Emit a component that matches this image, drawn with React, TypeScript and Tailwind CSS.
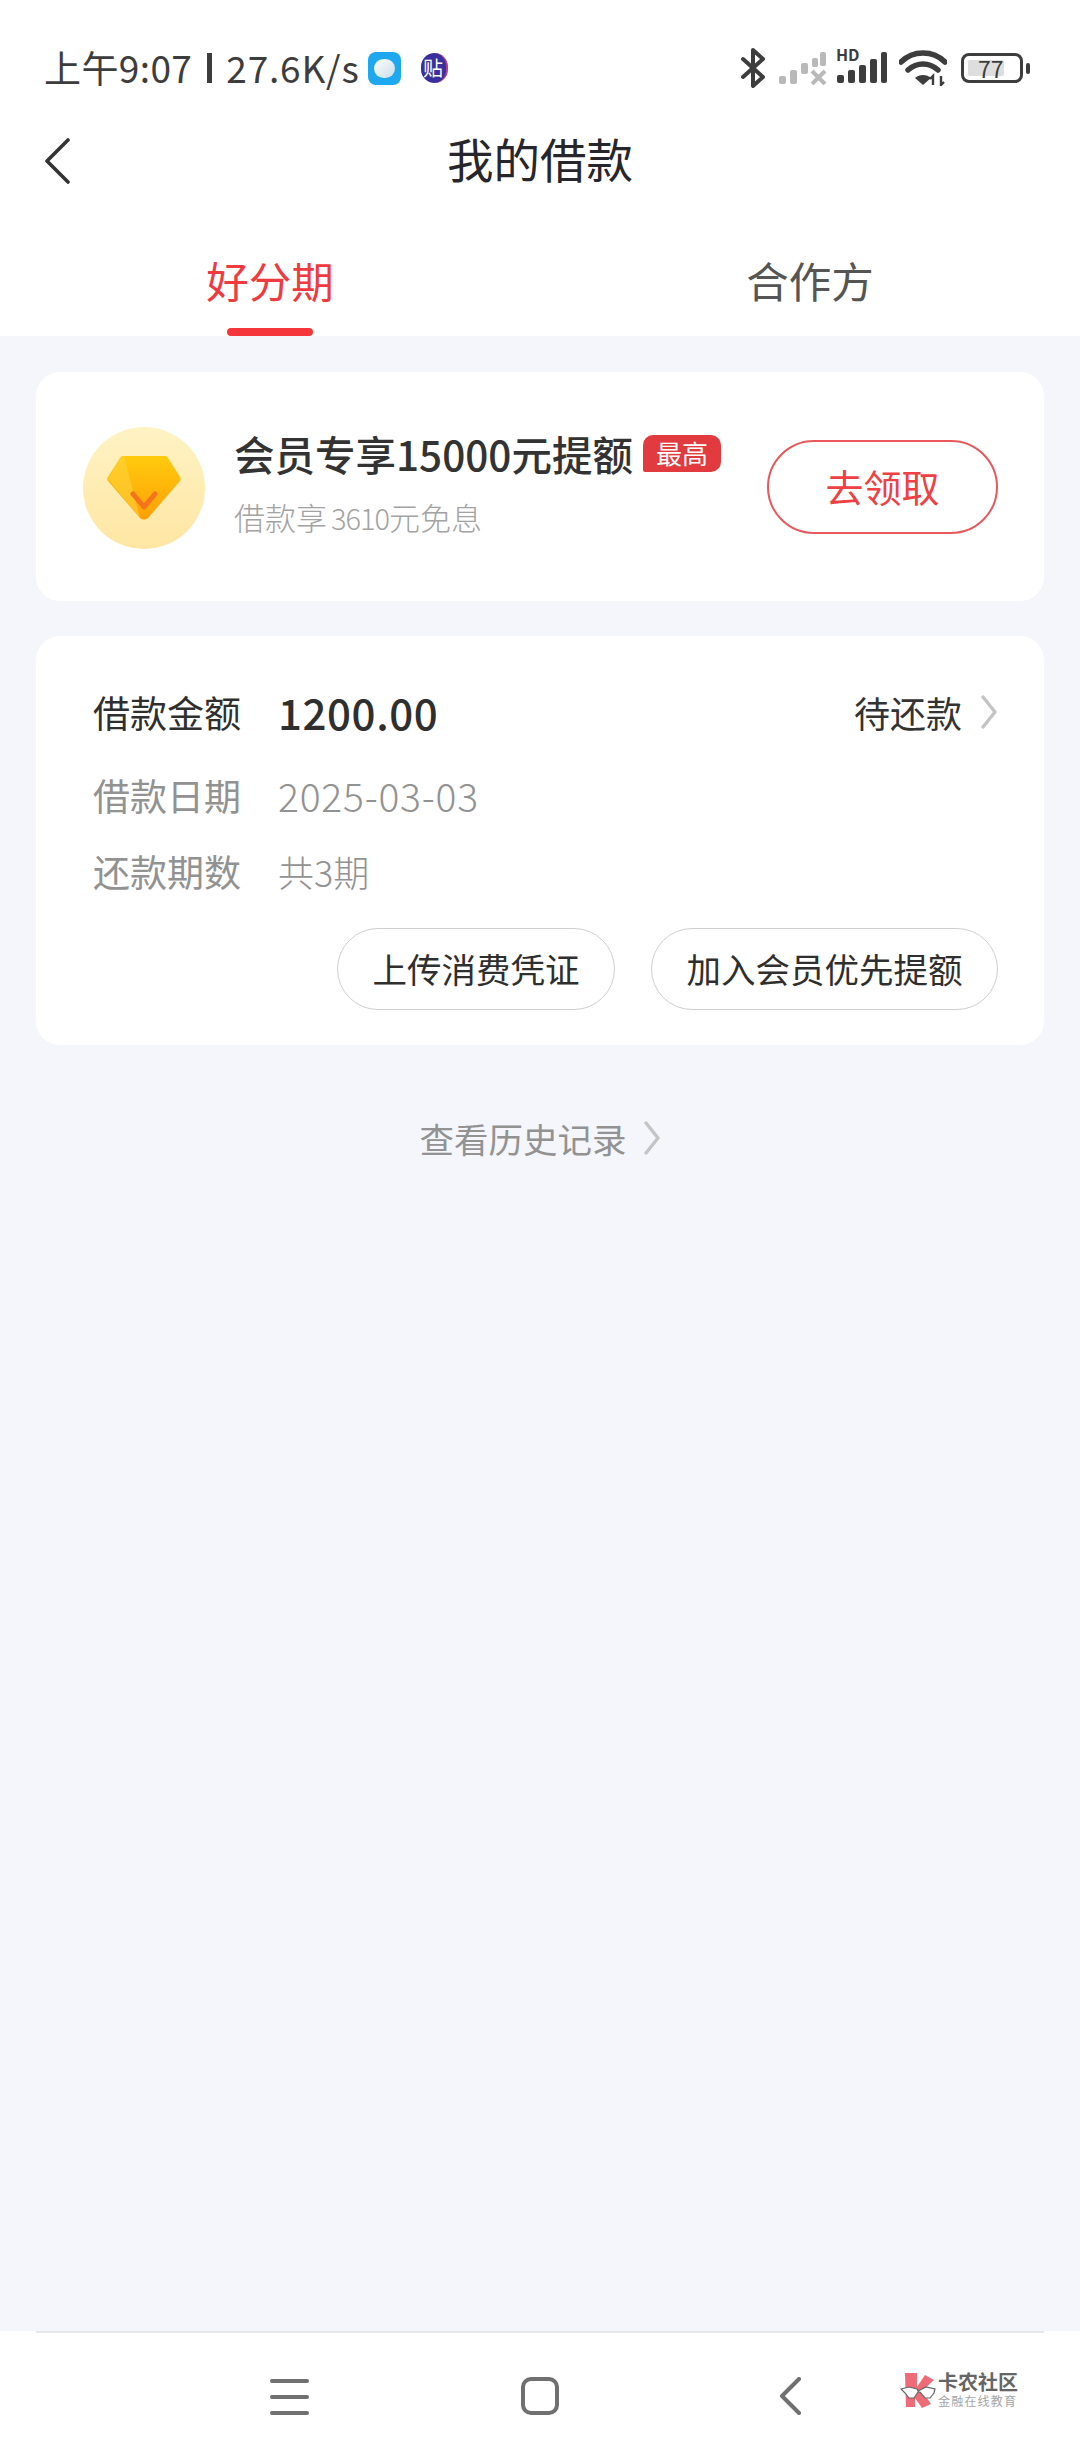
import React from 'react';

const font = { fontFamily: '"Noto Sans CJK SC", "Noto Sans", sans-serif' };

const Chevron = ({ className }: { className: string }) => (
  <svg viewBox="0 0 18 34" fill="none" className={className}>
    <path d="M3 2l12 15L3 32" stroke="currentColor" strokeWidth="3.4" strokeLinecap="round" strokeLinejoin="round" />
  </svg>
);

const StatusIcons = () => (
  <div className="flex items-center text-[#3d3d3d]">
    <svg viewBox="0 0 24 40" className="w-[24px] h-[40px]" fill="none">
      <path d="M2 11l20 18-10 9V2l10 9L2 29" stroke="currentColor" strokeWidth="4" strokeLinecap="round" strokeLinejoin="round" />
    </svg>
    <svg viewBox="0 0 48 34" className="ml-[14px] w-[48px] h-[34px]" fill="#b9b9b9">
      <rect x="0" y="25" width="7" height="8" rx="2" />
      <rect x="11" y="19" width="7" height="14" rx="2" />
      <rect x="22" y="12" width="7" height="11" rx="2" />
      <rect x="33" y="7" width="6" height="9" rx="2" />
      <rect x="41" y="1" width="6" height="14" rx="2" />
      <path d="M33 20l13 13M46 20L33 33" stroke="#b9b9b9" strokeWidth="4" />
    </svg>
    <div className="ml-[9px] relative w-[51px] h-[34px]">
      <span className="absolute left-0 top-[-7px] text-[16px] leading-[20px] font-bold">HD</span>
      <svg viewBox="0 0 51 34" className="w-[51px] h-[34px]" fill="currentColor">
        <rect x="1" y="24" width="7" height="8" rx="2" />
        <rect x="12" y="19" width="7" height="13" rx="2" />
        <rect x="23" y="14" width="7" height="18" rx="2" />
        <rect x="34" y="8" width="7" height="24" rx="2" />
        <rect x="45" y="1" width="6" height="31" rx="2" />
      </svg>
    </div>
    <svg viewBox="0 0 48 36" className="ml-[12px] w-[48px] h-[36px]" fill="none">
      <path d="M2 12C14 0 34 0 46 12" stroke="currentColor" strokeWidth="5.5" strokeLinecap="round" />
      <path d="M9 20c9-8 21-8 30 0" stroke="currentColor" strokeWidth="5.5" strokeLinecap="round" />
      <path d="M16 28c4-4 12-4 16 0l-8 7z" fill="currentColor" />
      <path d="M34 35v-9l-3 3M42 26v9l3-3" stroke="currentColor" strokeWidth="2.4" />
    </svg>
    <div className="ml-[14px] flex items-center">
      <div className="w-[62px] h-[30px] rounded-[8px] border-[3px] border-[#3d3d3d] p-[4px] relative">
        <div className="h-full w-[36px] bg-[#dedede] rounded-[2px]" />
        <span className="absolute left-[14px] top-[-3px] text-[23px] leading-[30px] text-[#3d3d3d]">77</span>
      </div>
      <div className="ml-[3px] w-[4px] h-[11px] rounded-full bg-[#3d3d3d]" />
    </div>
  </div>
);

const InfoRow = ({ label, className, children }: { label: string; className: string; children: React.ReactNode }) => (
  <div className={`flex items-center text-[#929292] ${className}`}>
    <span className="w-[185px] text-[37px] leading-[50px]">{label}</span>
    {children}
  </div>
);

export default function App() {
  return (
    <div style={font} className="w-[1080px] h-[2460px] bg-[#f4f6fb] flex flex-col overflow-hidden relative">
      <div className="bg-white">
        {/* status bar */}
        <div className="h-[112px] pl-[44px] pr-[50px] pt-[48px] flex justify-between items-start">
          <div className="flex items-center h-[40px] text-[37px] text-[#3d3d3d]">
            <span className="leading-[40px] whitespace-nowrap -mt-[3px] tracking-[0.4px]">上午9:07</span>
            <div className="ml-[15px] w-[5px] h-[30px] bg-[#3d3d3d]" />
            <span className="ml-[14px] leading-[40px] whitespace-nowrap -mt-[3px] tracking-[0.8px]">27.6K/s</span>
            <div className="ml-[8px] w-[33px] h-[33px] rounded-[8px] bg-[#1da8f0] flex items-center justify-center">
              <div className="w-[21px] h-[19px] rounded-full bg-gradient-to-br from-white to-[#c9dde8]" />
            </div>
            <div className="ml-[20px] w-[27px] h-[30px] rounded-full bg-[#3b2f9e] text-white text-[20px] leading-[30px] text-center border-r-2 border-[#b0408a]">贴</div>
          </div>
          <StatusIcons />
        </div>

        {/* title */}
        <div className="h-[96px] relative flex items-center justify-center">
          <svg viewBox="0 0 26 46" fill="none" className="absolute left-[44px] top-[26px] w-[26px] h-[46px] text-[#333]">
            <path d="M24 2L3 23l21 21" stroke="currentColor" strokeWidth="3.6" strokeLinecap="round" strokeLinejoin="round" />
          </svg>
          <span className="text-[46.5px] leading-[64px] -mt-[4px] text-[#26262c]">我的借款</span>
        </div>

        {/* tabs */}
        <div className="h-[128px] flex">
          <div className="w-[540px] relative flex justify-center pt-[42px]">
            <span className="text-[42.5px] leading-[60px] text-[#ef3b3f]">好分期</span>
            <div className="absolute bottom-0 left-[227px] w-[86px] h-[8px] rounded-full bg-[#f5363a]" />
          </div>
          <div className="w-[540px] flex justify-center pt-[42px]">
            <span className="text-[42.5px] leading-[60px] text-[#555]">合作方</span>
          </div>
        </div>
      </div>

      <div className="px-[36px] pt-[36px] flex flex-col gap-[35px]">
        {/* member card */}
        <div className="h-[229px] bg-white rounded-[24px] flex items-center pl-[47px] pr-[46px]">
          <div className="w-[122px] h-[122px] shrink-0 rounded-full bg-gradient-to-b from-[#fff3c4] to-[#ffe6a3] flex items-center justify-center mt-[2px]">
            <svg viewBox="0 0 76 66" className="w-[76px] h-[66px]">
              <defs>
                <linearGradient id="gem" x1="0" y1="0" x2="0" y2="1">
                  <stop offset="0" stopColor="#ffcb0e" />
                  <stop offset="1" stopColor="#ff9f06" />
                </linearGradient>
              </defs>
              <path d="M17 1h42a4 4 0 0 1 3 2l12 19a4 4 0 0 1 0 4L42 63a6 6 0 0 1-8 0L2 26a4 4 0 0 1 0-4L14 3a4 4 0 0 1 3-2z" fill="url(#gem)" />
              <path d="M14 3L2 24l32 39L18 1z" fill="#ffd23a" opacity="0.6" />
              <path d="M27 39l11 13 11-13" fill="none" stroke="#f5731c" strokeWidth="5" strokeLinecap="round" strokeLinejoin="round" />
            </svg>
          </div>
          <div className="ml-[29px] flex-1 -mt-[9px]">
            <div className="flex items-center">
              <span className="text-[40.5px] leading-[56px] font-medium text-[#333] whitespace-nowrap">会员专享15000元提额</span>
              <span className="ml-[10px] w-[78px] h-[37px] rounded-[10px] rounded-bl-[2px] bg-[#e23b3f] text-white text-[26px] leading-[36px] text-center">最高</span>
            </div>
            <div className="mt-[13px] text-[31px] leading-[44px] font-light text-[#a3a3a3]">
              借款享<span className="ml-[4px] text-[29px] tracking-[-1px]">3610</span>元免息
            </div>
          </div>
          <div className="w-[231px] h-[94px] shrink-0 rounded-full border-2 border-[#e9585a] text-[#ef4044] text-[38px] flex items-center justify-center">
            <span className="-mt-[3px]">去领取</span>
          </div>
        </div>

        {/* loan card */}
        <div className="h-[409px] bg-white rounded-[24px] pl-[57px] pr-[46px] pt-[51px]">
          <div className="flex items-center justify-between h-[50px]">
            <div className="flex items-center text-[#2f2f2f]">
              <span className="w-[185px] text-[37px] leading-[50px]">借款金额</span>
              <span className="text-[42px] leading-[50px] font-medium tracking-[0.6px]">1200.00</span>
            </div>
            <div className="flex items-center">
              <span className="text-[36px] leading-[50px] text-[#333]">待还款</span>
              <Chevron className="ml-[18px] w-[18px] h-[34px] text-[#c4c4c4]" />
            </div>
          </div>
          <InfoRow label="借款日期" className="mt-[33px]">
            <span className="text-[39px] leading-[50px] font-light tracking-[0.8px]">2025-03-03</span>
          </InfoRow>
          <InfoRow label="还款期数" className="mt-[26px]">
            <span className="text-[36px] leading-[50px] font-light">共3期</span>
          </InfoRow>
          <div className="mt-[32px] flex justify-end gap-[36px]">
            <div className="h-[82px] w-[278px] rounded-full border border-[#cfcfcf] flex items-center justify-center text-[34.5px] text-[#2f2f2f]">上传消费凭证</div>
            <div className="h-[82px] w-[347px] rounded-full border border-[#cfcfcf] flex items-center justify-center text-[34.5px] text-[#2f2f2f]">加入会员优先提额</div>
          </div>
        </div>
      </div>

      <div className="mt-[69px] flex items-center justify-center">
        <span className="text-[34.5px] leading-[48px] text-[#929292]">查看历史记录</span>
        <Chevron className="ml-[16px] w-[18px] h-[34px] text-[#c4c4c4]" />
      </div>

      {/* nav bar */}
      <div className="mt-auto h-[129px] bg-white relative flex items-start">
        <div className="absolute left-[36px] right-[36px] top-0 h-[2px] bg-[#e6e7ea]" />
        <div className="w-full pt-[46px] flex justify-center relative">
          <div className="absolute left-[270px] top-[48px] w-[39px] flex flex-col gap-[12px]">
            <div className="h-[4px] rounded-full bg-[#707070]" />
            <div className="h-[4px] rounded-full bg-[#707070]" />
            <div className="h-[4px] rounded-full bg-[#707070]" />
          </div>
          <div className="w-[38px] h-[38px] rounded-[10px] border-[4px] border-[#707070]" />
          <svg viewBox="0 0 22 38" fill="none" className="absolute left-[779px] top-[46px] w-[22px] h-[38px]">
            <path d="M20 2L3 19l17 17" stroke="#707070" strokeWidth="4" strokeLinecap="round" strokeLinejoin="round" />
          </svg>
          <div className="absolute left-[900px] top-[40px] flex items-center">
            <svg viewBox="0 0 36 38" className="w-[36px] h-[38px]">
              <path d="M5 2h12v14l8-12 9 5-12 11 9 13-9 4-7-10v9H6z" fill="#ef6b78" />
              <path d="M1 18l8-2 8 2 1 2 8-4 9 2-1 4-4 5-5 0-5-6-2 0-4 6-5 0-4-5z" fill="#fff" stroke="#666" strokeWidth="1.2" />
            </svg>
            <div className="ml-[2px] flex flex-col">
              <span className="text-[20px] leading-[22px] font-bold text-[#666] whitespace-nowrap">卡农社区</span>
              <span className="text-[12px] leading-[16px] tracking-[1.2px] text-[#a5a5a5] whitespace-nowrap">金融在线教育</span>
            </div>
          </div>
        </div>
      </div>
    </div>
  );
}
